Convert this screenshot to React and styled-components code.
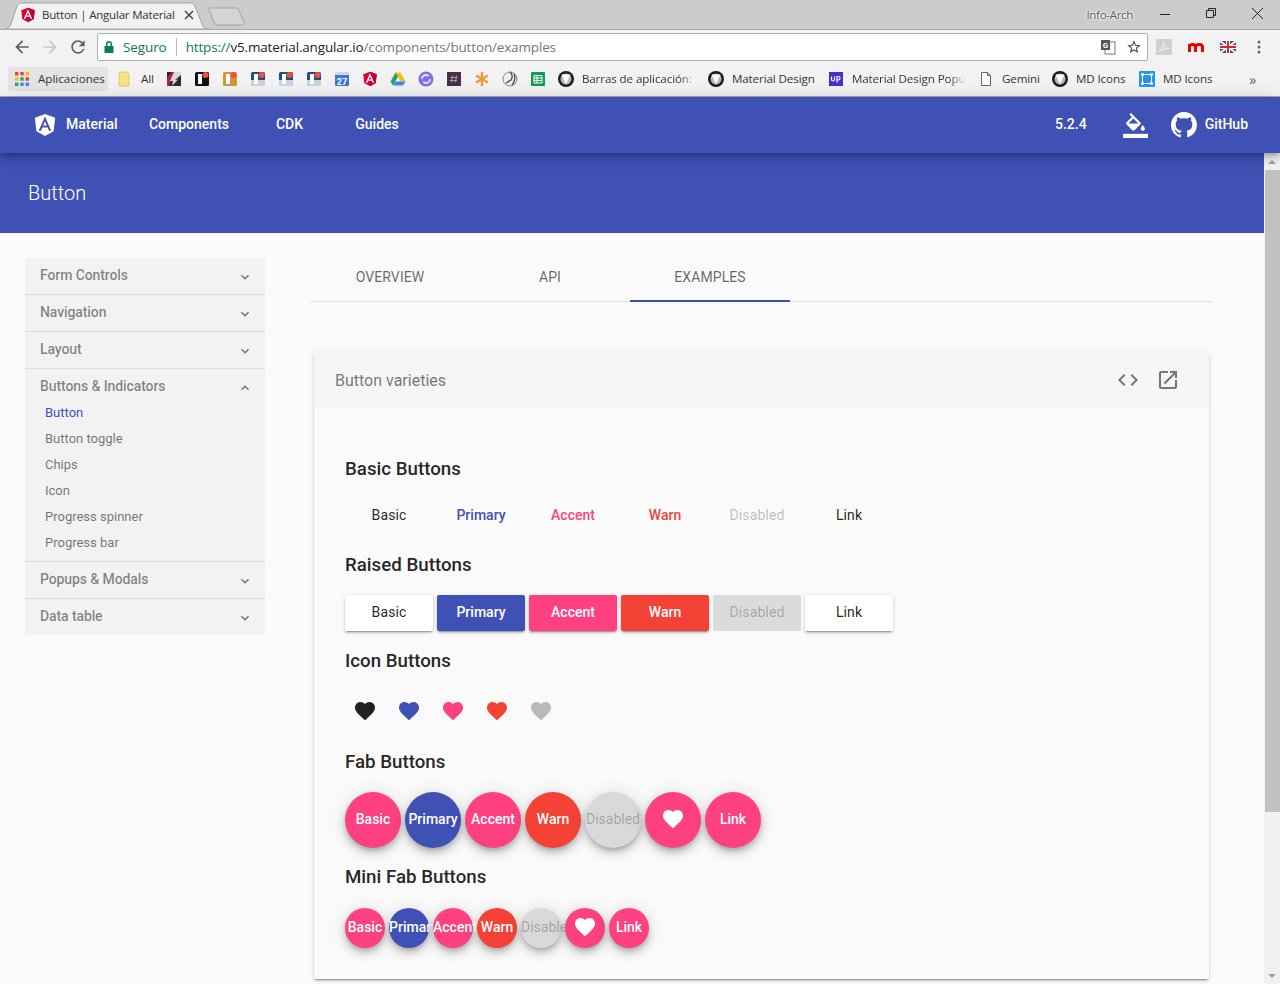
import styled, { createGlobalStyle } from "styled-components";

const INDIGO = "#3f51b5";
const PINK = "#ff4081";
const RED = "#f44336";
const MUTED = "rgba(0,0,0,.54)";

const HEART = "M12 21.35l-1.45-1.32C5.4 15.36 2 12.28 2 8.5 2 5.42 4.42 3 7.5 3c1.74 0 3.41.81 4.5 2.09C13.09 3.81 14.76 3 16.5 3 19.58 3 22 5.42 22 8.5c0 3.78-3.4 6.86-8.55 11.54L12 21.35z";
const GITHUB = "M8 0C3.58 0 0 3.58 0 8c0 3.54 2.29 6.53 5.47 7.59.4.07.55-.17.55-.38 0-.19-.01-.82-.01-1.49-2.01.37-2.53-.49-2.69-.94-.09-.23-.48-.94-.82-1.13-.28-.15-.68-.52-.01-.53.63-.01 1.08.58 1.23.82.72 1.21 1.87.87 2.33.66.07-.52.28-.87.51-1.07-1.78-.2-3.64-.89-3.64-3.95 0-.87.31-1.59.82-2.15-.08-.2-.36-1.02.08-2.12 0 0 .67-.21 2.2.82.64-.18 1.32-.27 2-.27.68 0 1.36.09 2 .27 1.53-1.04 2.2-.82 2.2-.82.44 1.1.16 1.92.08 2.12.51.56.82 1.27.82 2.15 0 3.07-1.87 3.75-3.65 3.95.29.25.54.73.54 1.48 0 1.07-.01 1.93-.01 2.2 0 .21.15.46.55.38A8.013 8.013 0 0016 8c0-4.42-3.58-8-8-8z";
const SHIELD = "M125 30 31.9 63.2l14.2 123.1L125 230l78.9-43.7 14.2-123.1z";
const LETTER_A = "M125 52.1 66.8 182.6h21.7l11.7-29.2h49.4l11.7 29.2H182L125 52.1zm17 83.3h-34l17-40.9 17 40.9z";

const Global = createGlobalStyle`
    html, body {
        margin: 0;
        padding: 0;
        height: 984px;
        overflow: hidden;
        background: #fafafa;
        font-family: Roboto, "Helvetica Neue", sans-serif;
    }
    * {
        box-sizing: border-box;
    }
`;

/* browser window */
const TabStrip = styled.div`
    height: 29px;
    background: #cccccc;
    display: flex;
    align-items: flex-end;
    font-family: "Open Sans", sans-serif;
`;

const Tab = styled.div`
    position: relative;
    width: 208px;
    height: 27px;
    padding: 0 0 1px 20px;
    display: flex;
    align-items: center;
    font-size: 11.5px;
    color: #333;
    > svg.shape {
        position: absolute;
        inset: 0;
    }
    > span, > svg.icon {
        position: relative;
    }
`;

const TabTitle = styled.span`
    width: 134px;
    margin: 0 0 2px 6px;
    white-space: nowrap;
    letter-spacing: -.2px;
`;

const TabClose = styled.svg`
    margin-left: 8px;
    position: relative;
`;

const NewTab = styled.svg`
    margin: 0 0 3px 0;
`;

const OwnerName = styled.div`
    margin-left: auto;
    align-self: center;
    font-size: 11.5px;
    letter-spacing: -.3px;
    color: #555;
    text-shadow: 0 0 2px #fff, 0 0 2px #fff, 0 0 3px #fff;
`;

const WindowButtons = styled.div`
    display: flex;
    align-self: flex-start;
    margin: 0 0 0 9px;
    width: 138px;
    height: 27px;
    > svg {
        width: 46px;
        height: 27px;
    }
`;

const Toolbar = styled.div`
    height: 36px;
    background: #f2f2f2;
    display: flex;
    align-items: center;
    padding: 0 6px 1px 12px;
    border-top: 1px solid #a9a9a9;
`;

const NavArrow = styled.svg`
    width: 20px;
    height: 20px;
    margin-right: 8px;
    flex: none;
    fill: ${p => p.$off ? "#c8c8c8" : "#616161"};
`;

const Omnibox = styled.div`
    width: 1051px;
    flex: none;
    height: 28px;
    margin-left: 1px;
    background: #fff;
    border: 1px solid #b0b0b0;
    border-radius: 2px;
    display: flex;
    align-items: center;
    padding: 0 0 0 5px;
    font-family: "Open Sans", sans-serif;
    font-size: 13.5px;
    white-space: nowrap;
`;

const Secure = styled.span`
    color: #0b8043;
    margin-left: 8px;
    padding-right: 9px;
    margin-right: 9px;
    border-right: 1px solid #bdbdbd;
    line-height: 18px;
    letter-spacing: -.1px;
`;

const Url = styled.span`
    letter-spacing: -.16px;
    flex: 1;
    color: #777;
    b { font-weight: 400; color: #0b8043; }
    i { font-style: normal; color: #222; }
`;

const ToolSlot = styled.div`
    width: ${p => p.$w || 26}px;
    flex: none;
    display: flex;
    justify-content: center;
    align-items: center;
`;

const ExtRow = styled.div`
    display: flex;
`;

const Bookmarks = styled.div`
    height: 32px;
    background: #f2f2f2;
    display: flex;
    align-items: center;
    padding: 0 0 3px 8px;
    gap: 12px;
    font-family: "Open Sans", sans-serif;
    font-size: 11.6px;
    color: #333;
    border-bottom: 1px solid #a9a9a9;
    white-space: nowrap;
`;

const AppsChip = styled.div`
    width: 100px;
    height: 24px;
    background: #e4e4e4;
    border-radius: 2px;
    display: flex;
    align-items: center;
    gap: 8px;
    padding-left: 6px;
    margin-right: -3px;
`;

const Mark = styled.div`
    display: flex;
    align-items: center;
    gap: 8px;
    letter-spacing: -.1px;
`;

const MarkText = styled.span`
    width: ${p => p.$w ? `${p.$w}px` : "auto"};
    margin-bottom: 2px;
    overflow: hidden;
    ${p => p.$fade && "-webkit-mask-image: linear-gradient(90deg, #000 85%, transparent);"}
`;

const MoreMarks = styled.span`
    margin-left: 23px;
    font-size: 15px;
    color: #666;
`;

/* site nav */
const SiteNav = styled.nav`
    position: relative;
    z-index: 2;
    height: 56px;
    background: ${INDIGO};
    color: #fff;
    display: flex;
    align-items: center;
    padding-left: 33px;
    font-size: 14px;
    font-weight: 500;
    box-shadow: 0 3px 5px -1px rgba(0,0,0,.2), 0 6px 10px 0 rgba(0,0,0,.14), 0 1px 18px 0 rgba(0,0,0,.12);
`;

const Brand = styled.div`
    width: 100px;
    display: flex;
    align-items: center;
    gap: 9px;
`;

const NavText = styled.span`
    padding-bottom: 2px;
`;

const NavLink = styled(NavText)`
    width: ${p => p.$w}px;
    text-align: center;
`;

const NavRight = styled.div`
    margin-left: auto;
    display: flex;
    align-items: center;
`;

const Version = styled(NavText)`
    margin-right: 36px;
`;

const ThemeIcon = styled.svg`
    width: 25px;
    height: 25px;
    margin-right: 23px;
    fill: #fff;
`;

const GithubLink = styled.div`
    display: flex;
    align-items: center;
    gap: 8px;
    padding-right: 32px;
`;

/* page */
const PageRow = styled.div`
    display: flex;
    height: 831px;
`;

const Main = styled.div`
    width: 1264px;
    overflow: hidden;
`;

const Banner = styled.header`
    height: 80px;
    background: ${INDIGO};
    color: #fff;
    display: flex;
    align-items: center;
    padding-left: 28px;
    h1 {
        margin: 0;
        font-size: 20px;
        font-weight: 300;
    }
`;

const Content = styled.div`
    display: flex;
    align-items: flex-start;
    padding: 20px 51px 0 25px;
    gap: 45px;
`;

const Side = styled.aside`
    width: 240px;
    margin-top: 5px;
    background: #f2f2f2;
`;

const Group = styled.div`
    border-bottom: 1px solid #dcdcdc;
    padding-bottom: ${p => p.$open ? 6 : 0}px;
    &:last-child {
        border-bottom: 0;
    }
`;

const GroupHead = styled.div`
    height: ${p => p.$open ? 30 : 36}px;
    display: flex;
    align-items: flex-start;
    justify-content: space-between;
    padding: 9px 12px 0 15px;
    font-size: 14px;
    font-weight: 500;
    letter-spacing: -.1px;
    line-height: 17px;
    color: rgba(0,0,0,.47);
    svg {
        width: 16px;
        height: 16px;
        margin-top: 2px;
        fill: ${MUTED};
    }
`;

const SideLink = styled.div`
    height: 26px;
    padding-left: 20px;
    display: flex;
    align-items: center;
    font-size: 13px;
    color: ${p => p.$active ? INDIGO : MUTED};
`;

const Docs = styled.div`
    flex: 1;
`;

const DocTabs = styled.div`
    height: 49px;
    display: flex;
    border-bottom: 1px solid #e0e0e0;
`;

const DocTab = styled.div`
    width: 160px;
    height: 49px;
    display: flex;
    align-items: center;
    justify-content: center;
    font-size: 14px;
    letter-spacing: .1px;
    color: rgba(0,0,0,.6);
    border-bottom: 2px solid ${p => p.$active ? INDIGO : "transparent"};
`;

const Card = styled.section`
    margin: 49px 4px 0;
    background: #fafafa;
    box-shadow: 0 3px 1px -2px rgba(0,0,0,.2), 0 2px 2px 0 rgba(0,0,0,.14), 0 1px 5px 0 rgba(0,0,0,.12);
    border-radius: 2px;
`;

const CardHead = styled.div`
    height: 57px;
    background: #f5f5f5;
    display: flex;
    align-items: center;
    padding: 0 21px;
    font-size: 16px;
    color: ${MUTED};
`;

const CardTitle = styled.span`
    flex: 1;
    padding-top: 2px;
`;

const HeadAction = styled.div`
    width: 40px;
    height: 40px;
    display: flex;
    align-items: center;
    justify-content: center;
    svg {
        width: 24px;
        height: 24px;
        fill: #757575;
    }
`;

const CardBody = styled.div`
    padding: 49px 31px 31px;
`;

const Heading = styled.h3`
    margin: ${p => p.$top || 0}px 0 0;
    height: 24px;
    line-height: 24px;
    font-size: 18.72px;
    font-weight: 500;
    color: rgba(0,0,0,.87);
`;

const Row = styled.div`
    display: flex;
    gap: ${p => p.$gap}px;
    margin-top: ${p => p.$top}px;
`;

const tone = {
    basic: { fg: "rgba(0,0,0,.87)", bg: "#fff" },
    primary: { fg: "#fff", bg: INDIGO, ink: INDIGO },
    accent: { fg: "#fff", bg: PINK, ink: PINK },
    warn: { fg: "#fff", bg: RED, ink: RED },
    disabled: { fg: "rgba(0,0,0,.26)", bg: "rgba(0,0,0,.12)" },
};

const isQuiet = t => t === "basic" || t === "disabled";

const FlatButton = styled.div`
    width: 88px;
    height: 36px;
    display: flex;
    align-items: center;
    justify-content: center;
    font-size: 14px;
    font-weight: ${p => isQuiet(p.$tone) ? 400 : 500};
    letter-spacing: ${p => isQuiet(p.$tone) ? ".1px" : "0"};
    color: ${p => tone[p.$tone].ink || tone[p.$tone].fg};
`;

const RaisedButton = styled(FlatButton)`
    padding-bottom: 2px;
    border-radius: 2px;
    color: ${p => tone[p.$tone].fg};
    background: ${p => tone[p.$tone].bg};
    box-shadow: ${p => p.$tone === "disabled" ? "none" : "0 3px 1px -2px rgba(0,0,0,.2), 0 2px 2px 0 rgba(0,0,0,.14), 0 1px 5px 0 rgba(0,0,0,.12)"};
`;

const IconButton = styled.div`
    width: 40px;
    height: 40px;
    padding-top: 2px;
    display: flex;
    align-items: center;
    justify-content: center;
    svg {
        width: 24px;
        height: 24px;
        fill: ${p => p.$tone === "disabled" ? "rgba(0,0,0,.26)" : p.$tone === "basic" ? "rgba(0,0,0,.87)" : tone[p.$tone].bg};
    }
`;

/* position: relative so the next button paints over a label that spills out */
const Fab = styled.div`
    position: relative;
    width: ${p => p.$size}px;
    height: ${p => p.$size}px;
    flex: none;
    border-radius: 50%;
    padding-bottom: 2px;
    display: flex;
    align-items: center;
    justify-content: safe center;
    white-space: nowrap;
    font-size: 14px;
    font-weight: ${p => p.$tone === "disabled" ? 400 : 500};
    color: ${p => p.$tone === "disabled" ? tone.disabled.fg : "#fff"};
    background: ${p => p.$tone === "disabled" ? "#d9d9d9" : p.$tone === "basic" ? PINK : tone[p.$tone].bg};
    box-shadow: 0 3px 5px -1px rgba(0,0,0,.2), 0 6px 10px 0 rgba(0,0,0,.14), 0 1px 18px 0 rgba(0,0,0,.12);
    svg {
        width: 24px;
        height: 24px;
        fill: #fff;
    }
`;

/* scrollbar */
const Scrollbar = styled.div`
    width: 16px;
    background: #f1f1f1;
    display: flex;
    flex-direction: column;
    align-items: flex-end;
`;

const ScrollArrow = styled.div`
    width: 100%;
    height: 17px;
    flex: none;
    display: flex;
    align-items: center;
    justify-content: center;
    &::before {
        content: "";
        border: 4px solid transparent;
        border-${p => p.$down ? "top" : "bottom"}-color: #a3a3a3;
        ${p => p.$down ? "margin-top: 4px;" : "margin-bottom: 4px;"}
    }
`;

const ScrollThumb = styled.div`
    width: 15px;
    height: 642px;
    background: #c1c1c1;
`;

const ScrollTrack = styled.div`
    flex: 1;
`;

/* favicons */
const Angular = ({ size = 16 }) => (
    <svg className="icon" width={size} height={size} viewBox="20 20 210 220">
        <path d={SHIELD} fill="#dd0031" />
        <path d="M125 30v200l78.9-43.7 14.2-123.1z" fill="#c3002f" />
        <path d={LETTER_A} fill="#fff" />
    </svg>
);

const Favicon = ({ kind }) => {
    switch (kind) {
        case "apps":
            return (
                <svg width="16" height="16" viewBox="0 0 16 16">
                    {[["#ea4335", "#ea4335", "#fbbc05"], ["#fbbc05", "#34a853", "#ea4335"], ["#34a853", "#4285f4", "#4285f4"]].map((row, y) =>
                        row.map((c, x) => <rect key={`${x}${y}`} x={1 + x * 5.3} y={1 + y * 5.3} width="3.4" height="3.4" fill={c} />)
                    )}
                </svg>
            );
        case "folder":
            return (
                <svg width="16" height="16" viewBox="0 0 16 16">
                    <path d="M2 1h8l2 2v12H2z" fill="#fbe08c" stroke="#e8c766" />
                </svg>
            );
        case "bolt":
            return (
                <svg width="16" height="16" viewBox="0 0 16 16">
                    <rect x="1" y="1" width="14" height="14" fill="#2b2b33" />
                    <path d="M1 15V7l5-6h2L3 15z" fill="#b8233f" />
                    <path d="M8 1h7v3L9 9l3-.500-6 6.500 1-5H4z" fill="#d9d9d9" />
                </svg>
            );
        case "invBlack":
        case "invOrange":
        case "invBlue": {
            const bg = { invBlack: "#111", invOrange: "#d2973c", invBlue: "#1f4f7d" }[kind];
            return (
                <svg width="16" height="16" viewBox="0 0 16 16">
                    <rect x="1" y="1" width="14" height="14" rx="1.5" fill={bg} />
                    {kind === "invBlue" && <rect x="1" y="9" width="14" height="6" fill="#c7d3de" />}
                    <rect x="4" y="3" width="4" height="10" fill="#fff" />
                    <circle cx="11.5" cy="4" r="3" fill="#f0503c" />
                </svg>
            );
        }
        case "calendar":
            return (
                <svg width="16" height="16" viewBox="0 0 16 16">
                    <rect x="1" y="1" width="14" height="14" rx="1" fill="#3a78d8" />
                    <rect x="1" y="1" width="14" height="3" fill="#c9d8ef" />
                    <text x="8" y="13.5" textAnchor="middle" fontSize="9" fontWeight="700" fontFamily="Roboto, sans-serif" fill="#fff">27</text>
                </svg>
            );
        case "angular":
            return <Angular />;
        case "drive":
            return (
                <svg width="16" height="16" viewBox="0 0 16 16">
                    <path d="M5.5 1.5h5l5 9h-5z" fill="#fbbc05" />
                    <path d="M5.5 1.5 .5 10.5 3 14.5l5-9z" fill="#1fa463" />
                    <path d="M3 14.5h10l2.500-4H5.500z" fill="#4285f4" />
                </svg>
            );
        case "ring":
            return (
                <svg width="16" height="16" viewBox="0 0 16 16">
                    <circle cx="8" cy="8" r="7.500" fill="#7c6fe4" />
                    <circle cx="8" cy="8" r="4" fill="none" stroke="#e6e2fb" strokeWidth="1.800" strokeDasharray="9 3.500" />
                </svg>
            );
        case "hash":
            return (
                <svg width="16" height="16" viewBox="0 0 16 16">
                    <rect x="1" y="1" width="14" height="14" fill="#4a2f4c" />
                    <path d="M6.500 4.500 5.500 11.500M10.500 4.500l-1 7M4.500 6.500h7M4 9.500h7" stroke="#a99aab" strokeWidth="1" fill="none" />
                </svg>
            );
        case "star":
            return (
                <svg width="16" height="16" viewBox="0 0 16 16">
                    <path d="M8 1v14M2 4.500l12 7M14 4.500l-12 7" stroke="#f09a36" strokeWidth="2.400" />
                </svg>
            );
        case "ball":
            return (
                <svg width="16" height="16" viewBox="0 0 16 16">
                    <circle cx="8" cy="8" r="7" fill="#eee" stroke="#888" />
                    <path d="M8 1c3 3 3 5 1 8l-5 3M12 3c2 4 0 9-2 11" stroke="#444" strokeWidth="1.300" fill="none" />
                </svg>
            );
        case "sheet":
            return (
                <svg width="16" height="16" viewBox="0 0 16 16">
                    <rect x="1" y="1" width="14" height="14" rx="1" fill="#0f9d58" />
                    <path d="M4 4.500h8v7.500H4zM4 7h8M4 9.500h8M7 4.500V12" stroke="#fff" fill="none" />
                </svg>
            );
        case "material":
            return (
                <svg width="16" height="16" viewBox="0 0 16 16">
                    <circle cx="8" cy="8" r="8" fill="#1c1c1c" />
                    <circle cx="8" cy="8" r="5.500" fill="#b8b8b8" />
                    <path d="M3.500 3.500h9L8 13.500z" fill="#fff" />
                </svg>
            );
        case "up":
            return (
                <svg width="16" height="16" viewBox="0 0 16 16">
                    <rect x="1" y="1" width="14" height="14" fill="#4a2bd4" />
                    <path d="M3.500 5.500v3c0 2 3 2 3 0v-3M9 11.500v-6h1.500c2 0 2 3.500 0 3.500H9" stroke="#fff" strokeWidth="1.200" fill="none" />
                </svg>
            );
        case "page":
            return (
                <svg width="16" height="16" viewBox="0 0 16 16">
                    <path d="M3.500 1.500h6l3 3v10h-9zM9.500 1.500v3h3" fill="#fff" stroke="#666" />
                </svg>
            );
        case "frame":
            return (
                <svg width="16" height="16" viewBox="0 0 16 16">
                    <rect width="16" height="16" rx="1" fill="#2196f3" />
                    <rect x="3.500" y="3.500" width="9" height="9" fill="none" stroke="#fff" />
                    {[[3.500, 3.500], [12.500, 3.500], [3.500, 12.500], [12.500, 12.500]].map(([x, y]) => (
                        <rect key={`${x}${y}`} x={x - 1.300} y={y - 1.300} width="2.600" height="2.600" fill="#fff" />
                    ))}
                </svg>
            );
        default:
            return null;
    }
};

const iconMarks = ["bolt", "invBlack", "invOrange", "invBlue", "invBlue", "invBlue", "calendar", "angular", "drive", "ring", "hash", "star", "ball", "sheet"];
const labelled = [
    { kind: "material", text: "Barras de aplicación:", w: 114, fade: true },
    { kind: "material", text: "Material Design", w: 84 },
    { kind: "up", text: "Material Design Popu", w: 114, fade: true },
    { kind: "page", text: "Gemini", w: 38 },
    { kind: "material", text: "MD Icons", w: 51 },
    { kind: "frame", text: "MD Icons", w: 51 },
];

const groups = [
    { name: "Form Controls" },
    { name: "Navigation" },
    { name: "Layout" },
    { name: "Buttons & Indicators", links: ["Button", "Button toggle", "Chips", "Icon", "Progress spinner", "Progress bar"] },
    { name: "Popups & Modals" },
    { name: "Data table" },
];

const varieties = [
    { tone: "basic", label: "Basic" },
    { tone: "primary", label: "Primary" },
    { tone: "accent", label: "Accent" },
    { tone: "warn", label: "Warn" },
    { tone: "disabled", label: "Disabled" },
];

const Heart = () => (
    <svg viewBox="0 0 24 24"><path d={HEART} /></svg>
);

function FabRow({ size, top, gap }) {
    return (
        <Row $gap={gap} $top={top}>
            {varieties.map(v => <Fab key={v.label} $size={size} $tone={v.tone}>{v.label}</Fab>)}
            <Fab $size={size} $tone="accent"><Heart /></Fab>
            <Fab $size={size} $tone="accent">Link</Fab>
        </Row>
    );
}

export default function App() {
    return (
        <>
            <Global />
            <TabStrip>
                <Tab>
                    <svg className="shape" width="208" height="27" viewBox="0 0 208 27">
                        <path d="M5 27c3 0 5-2 6-5l6-18c1-2 2-3 4-3h170c2 0 3 1 4 3l7 18c1 3 3 5 6 5z" fill="#f2f2f2" stroke="#a3a3a3" />
                    </svg>
                    <Angular />
                    <TabTitle>Button | Angular Material</TabTitle>
                    <TabClose width="10" height="10" viewBox="0 0 10 10">
                        <path d="M1 1l8 8M9 1l-8 8" stroke="#444" strokeWidth="1.500" />
                    </TabClose>
                </Tab>
                <NewTab width="38" height="19" viewBox="0 0 38 19">
                    <path d="M2 1h26c1 0 2 .5 2.500 1.500L36 15c.5 1.500 0 3-2 3H9c-1 0-2-.5-2.500-2L1 3C.5 1.500 1 1 2 1z" fill="#d4d4d4" stroke="#a3a3a3" />
                </NewTab>
                <OwnerName>Info-Arch</OwnerName>
                <WindowButtons>
                    <svg viewBox="0 0 46 27"><path d="M18 14.500h10" stroke="#222" /></svg>
                    <svg viewBox="0 0 46 27"><path d="M18.500 10.500h7v7h-7zM20.500 10.500v-2h7v7h-2" stroke="#222" fill="none" /></svg>
                    <svg viewBox="0 0 46 27"><path d="M18 8l11 11M29 8L18 19" stroke="#222" /></svg>
                </WindowButtons>
            </TabStrip>
            <Toolbar>
                <NavArrow viewBox="0 0 24 24"><path d="M20 11H7.830l5.590-5.590L12 4l-8 8 8 8 1.410-1.410L7.830 13H20v-2z" /></NavArrow>
                <NavArrow $off viewBox="0 0 24 24"><path d="M12 4l-1.410 1.410L16.170 11H4v2h12.170l-5.580 5.590L12 20l8-8z" /></NavArrow>
                <NavArrow viewBox="0 0 24 24"><path d="M17.650 6.350A7.958 7.958 0 0012 4c-4.420 0-7.990 3.580-7.990 8s3.570 8 7.990 8c3.730 0 6.840-2.550 7.730-6h-2.080A5.990 5.990 0 0112 18c-3.310 0-6-2.690-6-6s2.690-6 6-6c1.660 0 3.140.69 4.220 1.780L13 11h7V4l-2.350 2.350z" /></NavArrow>
                <Omnibox>
                    <svg width="12" height="14" viewBox="0 0 12 14">
                        <path d="M3 6V4a3 3 0 016 0v2h1.500v7h-9V6zm1.500 0h3V4a1.500 1.500 0 00-3 0z" fill="#0b8043" />
                    </svg>
                    <Secure>Seguro</Secure>
                    <Url><b>https://</b><i>v5.material.angular.io</i>/components/button/examples</Url>
                    <ToolSlot>
                        <svg width="16" height="16" viewBox="0 0 16 16">
                            <rect x="5" y="3" width="10" height="12" fill="#fff" stroke="#777" />
                            <rect x="1" y="1" width="9" height="10" fill="#555" />
                            <text x="5.500" y="9" fontSize="8" fontWeight="700" textAnchor="middle" fill="#fff" fontFamily="Roboto, sans-serif">G</text>
                        </svg>
                    </ToolSlot>
                    <ToolSlot>
                        <svg width="16" height="16" viewBox="0 0 24 24">
                            <path d="M22 9.240l-7.190-.620L12 2 9.190 8.630 2 9.240l5.460 4.730L5.820 21 12 17.270 18.180 21l-1.630-7.030L22 9.240zM12 15.400l-3.760 2.270 1-4.280-3.320-2.880 4.380-.380L12 6.100l1.710 4.040 4.380.380-3.320 2.880 1 4.280L12 15.400z" fill="#444" />
                        </svg>
                    </ToolSlot>
                </Omnibox>
                <ExtRow>
                    <ToolSlot $w={32}>
                        <svg width="16" height="16" viewBox="0 0 16 16">
                            <rect width="16" height="16" fill="#d0d0d0" />
                            <path d="M3 12c3-1 5-5 4.500-9C7.500 6 10 9 13 9.500 10 9.500 6 10 3 12z" fill="none" stroke="#f3f3f3" />
                        </svg>
                    </ToolSlot>
                    <ToolSlot $w={32}>
                        <svg width="18" height="12" viewBox="0 0 18 12">
                            <path d="M2.500 11V3M2.500 6c0-3.500 6-3.500 6 0v5M8.500 6c0-3.500 7-3.500 7 0v5" fill="none" stroke="#e00" strokeWidth="3" />
                        </svg>
                    </ToolSlot>
                    <ToolSlot $w={32}>
                        <svg width="16" height="12" viewBox="0 0 16 12">
                            <rect width="16" height="12" fill="#3b4f8f" />
                            <path d="M0 0l16 12M16 0L0 12" stroke="#fff" strokeWidth="2" />
                            <path d="M8 0v12M0 6h16" stroke="#fff" strokeWidth="4" />
                            <path d="M8 0v12M0 6h16" stroke="#d22" strokeWidth="2" />
                        </svg>
                    </ToolSlot>
                    <ToolSlot $w={30}>
                        <svg width="4" height="14" viewBox="0 0 4 14">
                            <circle cx="2" cy="2" r="1.500" fill="#666" />
                            <circle cx="2" cy="7" r="1.500" fill="#666" />
                            <circle cx="2" cy="12" r="1.500" fill="#666" />
                        </svg>
                    </ToolSlot>
                </ExtRow>
            </Toolbar>
            <Bookmarks>
                <AppsChip><Favicon kind="apps" /><MarkText>Aplicaciones</MarkText></AppsChip>
                <Mark><Favicon kind="folder" /><MarkText>All</MarkText></Mark>
                {iconMarks.map((kind, i) => <Favicon key={i} kind={kind} />)}
                {labelled.map(m => (
                    <Mark key={m.text + m.kind}>
                        <Favicon kind={m.kind} />
                        <MarkText $w={m.w} $fade={m.fade}>{m.text}</MarkText>
                    </Mark>
                ))}
                <MoreMarks>»</MoreMarks>
            </Bookmarks>
            <SiteNav>
                <Brand>
                    <svg width="24" height="24" viewBox="20 20 210 220">
                        <path d={SHIELD} fill="#fff" />
                        <path d={LETTER_A} fill={INDIGO} />
                    </svg>
                    <NavText>Material</NavText>
                </Brand>
                <NavLink $w={112}>Components</NavLink>
                <NavLink $w={89}>CDK</NavLink>
                <NavLink $w={86}>Guides</NavLink>
                <NavRight>
                    <Version>5.2.4</Version>
                    <ThemeIcon viewBox="0 0 24 24">
                        <path d="M16.560 8.940 7.620 0 6.210 1.410l2.380 2.380-5.150 5.150c-.59.59-.59 1.540 0 2.120l5.500 5.500c.29.29.68.44 1.060.44s.77-.15 1.060-.44l5.500-5.500c.59-.58.59-1.530 0-2.120zM5.210 10 10 5.210 14.790 10H5.210zM19 11.500s-2 2.170-2 3.500c0 1.100.9 2 2 2s2-.9 2-2c0-1.330-2-3.500-2-3.500z" />
                        <path d="M0 20h24v4H0z" />
                    </ThemeIcon>
                    <GithubLink>
                        <svg width="26" height="26" viewBox="0 0 16 16"><path d={GITHUB} fill="#fff" /></svg>
                        <NavText>GitHub</NavText>
                    </GithubLink>
                </NavRight>
            </SiteNav>
            <PageRow>
                <Main>
                    <Banner><h1>Button</h1></Banner>
                    <Content>
                        <Side>
                            {groups.map(g => (
                                <Group key={g.name} $open={!!g.links}>
                                    <GroupHead $open={!!g.links}>
                                        {g.name}
                                        <svg viewBox="0 0 24 24">
                                            <path d={g.links ? "M7.410 15.410 12 10.830l4.590 4.580L18 14l-6-6-6 6z" : "M7.410 8.590 12 13.170l4.590-4.580L18 10l-6 6-6-6z"} />
                                        </svg>
                                    </GroupHead>
                                    {g.links && g.links.map((l, i) => <SideLink key={l} $active={i === 0}>{l}</SideLink>)}
                                </Group>
                            ))}
                        </Side>
                        <Docs>
                            <DocTabs>
                                <DocTab>OVERVIEW</DocTab>
                                <DocTab>API</DocTab>
                                <DocTab $active>EXAMPLES</DocTab>
                            </DocTabs>
                            <Card>
                                <CardHead>
                                    <CardTitle>Button varieties</CardTitle>
                                    <HeadAction>
                                        <svg viewBox="0 0 24 24"><path d="M9.400 16.600 4.800 12l4.600-4.600L8 6l-6 6 6 6 1.400-1.400zm5.200 0 4.600-4.600-4.600-4.600L16 6l6 6-6 6-1.400-1.400z" /></svg>
                                    </HeadAction>
                                    <HeadAction>
                                        <svg viewBox="0 0 24 24"><path d="M19 19H5V5h7V3H5c-1.110 0-2 .9-2 2v14c0 1.100.89 2 2 2h14c1.100 0 2-.9 2-2v-7h-2v7zM14 3v2h3.590l-9.830 9.830 1.410 1.410L19 6.410V10h2V3h-7z" /></svg>
                                    </HeadAction>
                                </CardHead>
                                <CardBody>
                                    <Heading>Basic Buttons</Heading>
                                    <Row $gap={4} $top={16}>
                                        {varieties.map(v => <FlatButton key={v.label} $tone={v.tone}>{v.label}</FlatButton>)}
                                        <FlatButton $tone="basic">Link</FlatButton>
                                    </Row>
                                    <Heading $top={20}>Raised Buttons</Heading>
                                    <Row $gap={4} $top={18}>
                                        {varieties.map(v => <RaisedButton key={v.label} $tone={v.tone}>{v.label}</RaisedButton>)}
                                        <RaisedButton $tone="basic">Link</RaisedButton>
                                    </Row>
                                    <Heading $top={18}>Icon Buttons</Heading>
                                    <Row $gap={4} $top={17}>
                                        {varieties.map(v => <IconButton key={v.label} $tone={v.tone}><Heart /></IconButton>)}
                                    </Row>
                                    <Heading $top={20}>Fab Buttons</Heading>
                                    <FabRow size={56} gap={4} top={18} />
                                    <Heading $top={17}>Mini Fab Buttons</Heading>
                                    <FabRow size={40} gap={4} top={19} />
                                </CardBody>
                            </Card>
                        </Docs>
                    </Content>
                </Main>
                <Scrollbar>
                    <ScrollArrow />
                    <ScrollThumb />
                    <ScrollTrack />
                    <ScrollArrow $down />
                </Scrollbar>
            </PageRow>
        </>
    );
}
